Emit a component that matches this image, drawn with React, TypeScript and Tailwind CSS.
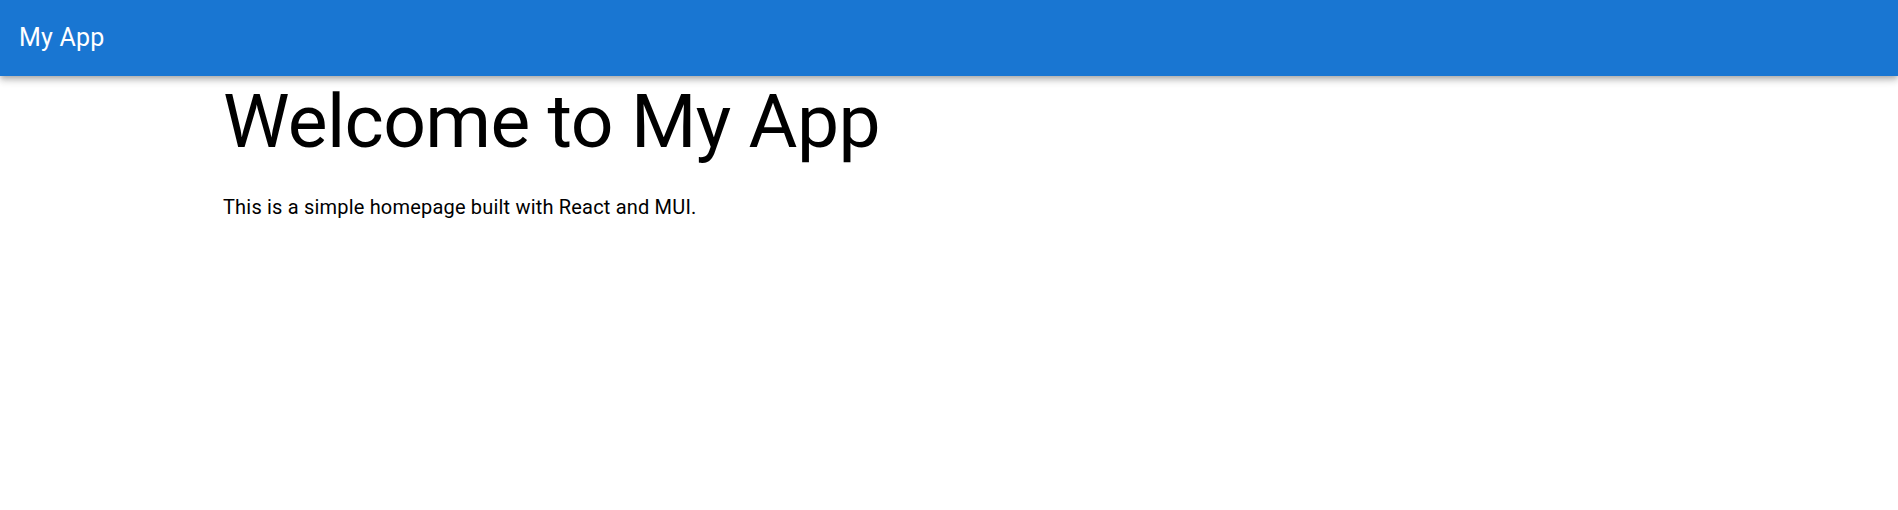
export default function App() {
  return (
    <div className="min-h-screen bg-white font-['Roboto','Helvetica','Arial',sans-serif] text-black">
      <header className="relative z-10 bg-[#1976d2] text-white shadow-[0_2px_5px_-1px_rgba(0,0,0,0.2),0_5px_6px_0_rgba(0,0,0,0.14),0_1px_12px_0_rgba(0,0,0,0.12)]">
        <div className="flex h-[76px] items-center px-[19px]">
          <h6 className="text-[25px] font-normal leading-[1.6] tracking-[0.0075em]">My App</h6>
        </div>
      </header>

      <main className="mx-auto max-w-[1452px]">
        <h2 className="mb-[26px] text-[75px] font-normal leading-[1.2] tracking-[-0.00833em]">
          Welcome to My App
        </h2>
        <p className="text-[20px] leading-[1.5] tracking-[0.00938em]">
          This is a simple homepage built with React and MUI.
        </p>
      </main>
    </div>
  )
}
